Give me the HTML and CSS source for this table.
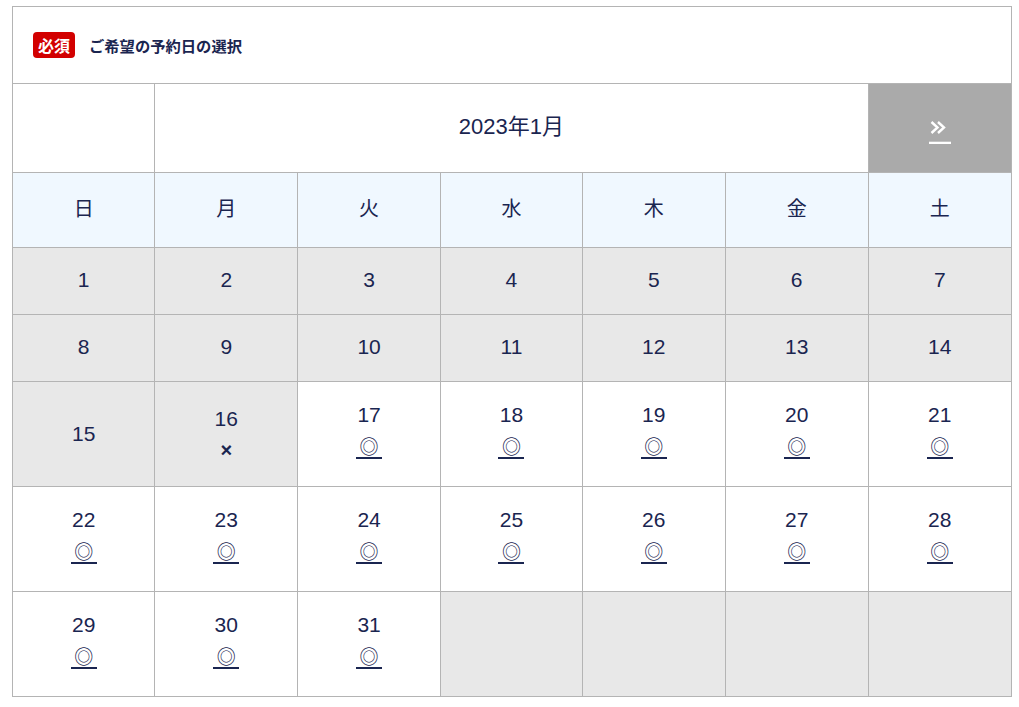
FILE: index.html
```html
<!DOCTYPE html>
<html lang="ja">
<head>
<meta charset="utf-8">
<title>ご希望の予約日の選択</title>
<link rel="stylesheet" href="styles.css">
</head>
<body>
<div class="panel">
  <div class="head">
    <span class="badge">必須</span>
    <span class="title">ご希望の予約日の選択</span>
  </div>
  <table class="cal">
    <colgroup>
      <col class="c1"><col class="c2"><col class="c2"><col class="c1"><col class="c2"><col class="c2"><col class="c2">
    </colgroup>
    <tr class="month-row">
      <td></td>
      <td colspan="5" class="month">2023年1月</td>
      <td class="next">
        <svg class="next-icon" width="22" height="24" viewBox="0 0 22 24">
          <path d="M2.5 2 L8.5 7.5 L2.5 13 M9 2 L15 7.5 L9 13" fill="none" stroke="#fff" stroke-width="2.4" stroke-linejoin="miter"/>
          <rect x="0" y="21.7" width="22" height="2.3" fill="#fff"/>
        </svg>
      </td>
    </tr>
    <tr class="week-row">
      <th>日</th><th>月</th><th>火</th><th>水</th><th>木</th><th>金</th><th>土</th>
    </tr>
    <tr class="short">
      <td class="off">1</td><td class="off">2</td><td class="off">3</td><td class="off">4</td><td class="off">5</td><td class="off">6</td><td class="off">7</td>
    </tr>
    <tr class="short">
      <td class="off">8</td><td class="off">9</td><td class="off">10</td><td class="off">11</td><td class="off">12</td><td class="off">13</td><td class="off">14</td>
    </tr>
    <tr class="tall">
      <td class="off">15</td>
      <td class="off"><div class="num">16</div><div class="x">×</div></td>
      <td><div class="num">17</div><div class="mk"><span>◎</span></div></td>
      <td><div class="num">18</div><div class="mk"><span>◎</span></div></td>
      <td><div class="num">19</div><div class="mk"><span>◎</span></div></td>
      <td><div class="num">20</div><div class="mk"><span>◎</span></div></td>
      <td><div class="num">21</div><div class="mk"><span>◎</span></div></td>
    </tr>
    <tr class="tall">
      <td><div class="num">22</div><div class="mk"><span>◎</span></div></td>
      <td><div class="num">23</div><div class="mk"><span>◎</span></div></td>
      <td><div class="num">24</div><div class="mk"><span>◎</span></div></td>
      <td><div class="num">25</div><div class="mk"><span>◎</span></div></td>
      <td><div class="num">26</div><div class="mk"><span>◎</span></div></td>
      <td><div class="num">27</div><div class="mk"><span>◎</span></div></td>
      <td><div class="num">28</div><div class="mk"><span>◎</span></div></td>
    </tr>
    <tr class="tall">
      <td><div class="num">29</div><div class="mk"><span>◎</span></div></td>
      <td><div class="num">30</div><div class="mk"><span>◎</span></div></td>
      <td><div class="num">31</div><div class="mk"><span>◎</span></div></td>
      <td class="off"></td><td class="off"></td><td class="off"></td><td class="off"></td>
    </tr>
  </table>
</div>
</body>
</html>
```
FILE: styles.css
```css
body {
  margin: 0;
  font-family: "Liberation Sans", "Noto Sans CJK JP", sans-serif;
  color: #1a2550;
  background: #fff;
}
.panel {
  width: 998px;
  margin: 6px 0 0 12px;
  border: 1px solid #b4b4b4;
}
.head {
  height: 76px;
  display: flex;
  align-items: center;
  gap: 14px;
  padding-left: 20px;
  border-bottom: 1px solid #b4b4b4;
}
.badge {
  width: 42px;
  height: 26px;
  border-radius: 4px;
  background: #d20000;
  color: #fff;
  font-family: "Noto Sans CJK JP", sans-serif;
  font-weight: bold;
  font-size: 16px;
  display: flex;
  align-items: center;
  justify-content: center;
}
.title {
  font-family: "Noto Sans CJK JP", sans-serif;
  font-weight: bold;
  font-size: 15.3px;
}
.cal {
  width: 100%;
  border-collapse: collapse;
  border-style: hidden;
  table-layout: fixed;
}
.c1 { width: 141px; }
.c2 { width: 142px; }
.cal td, .cal th {
  border: 1px solid #b4b4b4;
  padding: 0;
  text-align: center;
  vertical-align: middle;
  font-size: 21px;
  font-weight: normal;
}
.month-row { height: 88px; }
.cal .month {
  font-size: 22px;
  line-height: 24px;
  vertical-align: top;
  padding-top: 31px;
}
.next { background: #aaaaaa; }
.next-icon { display: block; margin: 8px auto 0; }
.week-row { height: 75px; }
.week-row th {
  background: #f0f8ff;
  font-family: "Noto Sans CJK JP", sans-serif;
  font-size: 20px;
  padding-bottom: 4px;
}
.short { height: 67px; }
.short td { padding-bottom: 2px; }
.tall { height: 105px; }
.off { background: #e8e8e8; }
.num { line-height: 32px; }
.x { line-height: 30px; font-weight: bold; font-size: 20px; }
.mk { height: 38px; }
.mk span {
  display: inline-block;
  width: 26px;
  height: 26px;
  line-height: 29px;
  border-bottom: 2px solid #1a2550;
  font-family: "Noto Sans CJK JP", sans-serif;
  font-size: 19px;
  vertical-align: top;
}
```
